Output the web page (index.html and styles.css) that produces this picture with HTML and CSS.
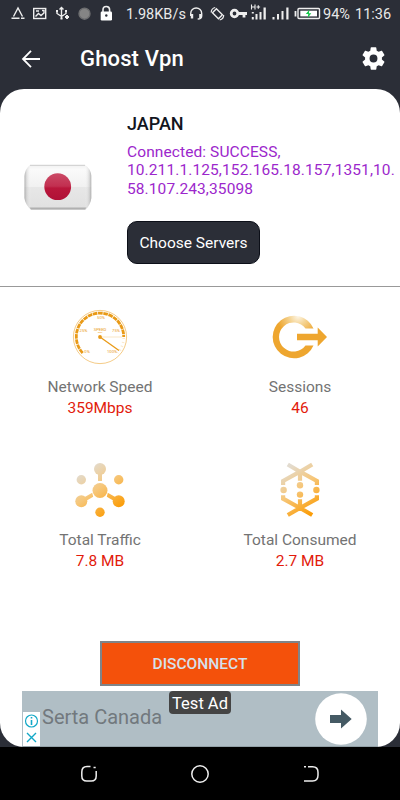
FILE: index.html
```html
<!DOCTYPE html>
<html lang="en">
<head>
  <meta charset="UTF-8" />
  <meta name="viewport" content="width=device-width, initial-scale=1.0"/>
  <title>Ghost Vpn</title>
  <link rel="stylesheet" href="styles.css">
</head>
<body>

  <div class="status-bar">
    <svg class="status-left" width="104" height="28" viewBox="0 0 104 28" fill="none" stroke="#eee" stroke-width="1.4">
      <path d="M3.500 16.500L8 8l4.500 8.500M1.500 18.300H5M11 18.300h3.500M5 18.300h4.500"/>
      <rect x="23.700" y="8.500" width="12" height="10"/>
      <path d="M26 11h3M32 10.500h2v2M25.500 16.500l3-3 2.500 2 3.500-3"/>
      <path d="M51.500 8v11M47 11v2.500l4.500 3 4.500-3v-2.500M49.500 9.500l2-2 2 2"/>
      <path d="M46 11h2M55 11h2M50.500 18.500h2M57 15v4M55 17h4" stroke-width="2"/>
      <circle cx="74.500" cy="13.700" r="5.500" fill="#858585" stroke="#6d6e70"/>
      <path d="M93 12V9.800a3.300 3.300 0 0 1 6.600 0V12" stroke-width="1.600"/>
      <rect x="90.700" y="11.500" width="11.300" height="9" rx="1.200" fill="#fff" stroke="none"/>
      <circle cx="96.300" cy="15.500" r="1.200" fill="#2b2e37" stroke="none"/>
    </svg>
    <span class="net-rate">1.98KB/s</span>
    <svg class="status-right" width="133" height="28" viewBox="0 0 133 28" fill="none" stroke="#eee" stroke-width="1.400">
      <path d="M2.700 16v-2.500a5.500 5.500 0 0 1 11 0V16q0 3-4 3"/>
      <path d="M4 14v4.500M12.400 14v4" stroke-width="2.400"/>
      <rect x="26.600" y="9.500" width="5.600" height="8.500" transform="rotate(-45 29.400 13.700)"/>
      <path d="M23.200 12.500q0-4 4-5M35.700 15q0 4-4 5" stroke-width="1.200"/>
      <circle cx="46.500" cy="13.500" r="3.300" stroke-width="2.800"/>
      <path d="M50 13.500h9M56 13.500v4" stroke-width="2.800"/>
      <g fill="#eee" stroke="none">
        <path d="M63.800 17h2v2.500h-2zM67.500 14h2v5.500h-2zM71.500 12h2v7.500h-2zM75.500 7.500h2.300v12h-2.300zM63.800 12h2v1.500h-2z"/>
        <path d="M85 17h2v2.500h-2zM89.500 14h2v5.500h-2zM94 11h2v8.500h-2zM98.800 7.500h2.200v12h-2.200z" transform="translate(-.5)"/>
      </g>
      <path d="M63.500 4.500v5M67 4.500v5M63.500 7H67M68.500 7h3.600M70.300 5.200v3.600" stroke-width="1.100"/>
      <path d="M107.500 11v5.500" stroke-width="1.800"/>
      <rect x="110" y="8.500" width="21.500" height="10" rx="1"/>
      <rect x="112.300" y="10.700" width="16.700" height="5.700" fill="#fff" stroke="none"/>
      <path d="M121.500 9.500l-3.700 4.500h2.500l-.7 4 3.700-4.700h-2.400z" fill="#13c948" stroke="none"/>
    </svg>
    <span class="battery">94%</span>
    <span class="clock">11:36</span>
  </div>

  <div class="app-bar">
    <svg class="back" width="20" height="18" viewBox="0 0 20 18" fill="none" stroke="#fff" stroke-width="1.800">
      <path d="M10 .8L2 9l8 8.200M2 9h17"/>
    </svg>
    <h1>Ghost Vpn</h1>
    <svg class="settings" width="27" height="27" viewBox="0 0 24 24" fill="#fff">
      <path d="M19.430 12.980c.04-.32.07-.64.07-.98s-.03-.66-.07-.98l2.110-1.650c.19-.15.24-.42.12-.64l-2-3.460c-.12-.22-.39-.3-.61-.22l-2.490 1c-.52-.4-1.080-.73-1.690-.98l-.38-2.650C14.460 2.180 14.250 2 14 2h-4c-.25 0-.46.18-.49.42l-.38 2.650c-.61.25-1.170.59-1.690.98l-2.490-1c-.23-.09-.49 0-.61.22l-2 3.460c-.13.22-.07.49.12.64l2.110 1.650c-.04.32-.07.65-.07.98s.03.66.07.98l-2.110 1.650c-.19.15-.24.42-.12.64l2 3.460c.12.22.39.3.61.22l2.490-1c.52.4 1.080.73 1.690.98l.38 2.650c.03.24.24.42.49.42h4c.25 0 .46-.18.49-.42l.38-2.650c.61-.25 1.170-.59 1.690-.98l2.490 1c.23.09.49 0 .61-.22l2-3.460c.12-.22.07-.49-.12-.64l-2.110-1.650zM12 15.500a3.500 3.500 0 1 1 0-7 3.500 3.500 0 0 1 0 7z"/>
    </svg>
  </div>

  <div class="card">
    <div class="server">
      <svg class="flag" width="70" height="48" viewBox="0 0 70 48">
        <defs>
          <linearGradient id="flag-bg" x1="0" y1="0" x2="0" y2="1">
            <stop offset="0" stop-color="#f1f1f1"/>
            <stop offset=".1" stop-color="#fafafa"/>
            <stop offset=".48" stop-color="#f1f1f1"/>
            <stop offset=".5" stop-color="#e7e7e7"/>
            <stop offset="1" stop-color="#e0e0e0"/>
          </linearGradient>
          <linearGradient id="flag-edge" x1="0" y1="0" x2="1" y2="0">
            <stop offset="0" stop-color="#999" stop-opacity=".75"/>
            <stop offset=".03" stop-color="#bbb" stop-opacity=".45"/>
            <stop offset=".1" stop-color="#fff" stop-opacity="0"/>
            <stop offset=".9" stop-color="#fff" stop-opacity="0"/>
            <stop offset=".97" stop-color="#bbb" stop-opacity=".45"/>
            <stop offset="1" stop-color="#999" stop-opacity=".75"/>
          </linearGradient>
          <linearGradient id="flag-sun" x1="0" y1="0" x2="0" y2="1">
            <stop offset="0" stop-color="#cb4a66"/>
            <stop offset=".48" stop-color="#c22f50"/>
            <stop offset=".55" stop-color="#b9173b"/>
            <stop offset="1" stop-color="#b01037"/>
          </linearGradient>
        </defs>
        <path d="M7 1h55q6 4 6.300 11v22q-.5 6-5.800 12H8q-6-6-6.500-12V12Q2 5 7 1z" fill="url(#flag-bg)"/>
        <path d="M7 1h55q6 4 6.300 11v22q-.5 6-5.800 12H8q-6-6-6.500-12V12Q2 5 7 1z" fill="url(#flag-edge)"/>
        <path d="M7 1.300h55" stroke="#ccc"/>
        <path d="M6.500 43.500h57l-1.500 2H8z" fill="#b0b0b0"/>
        <circle cx="34.700" cy="22.700" r="13.400" fill="url(#flag-sun)"/>
      </svg>
      <div class="server-info">
        <h2>JAPAN</h2>
        <p>Connected: SUCCESS,<br>10.211.1.125,152.165.18.157,1351,10.<br>58.107.243,35098</p>
        <button class="choose-btn">Choose Servers</button>
      </div>
    </div>

    <div class="stats">
      <div class="stat">
        <svg width="60" height="60" viewBox="0 0 60 60" fill="none" stroke="#e99a17">
          <circle cx="30" cy="30" r="26.600" stroke-width=".8" opacity=".65"/>
          <path d="M12.700 46A23.700 23.700 0 1 1 53.700 30" stroke-width="2.800" stroke-dasharray="4.600 .7"/>
          <path d="M53.700 31a23.700 23.700 0 0 1-6 15" stroke-width="2.600" stroke-dasharray="1 3" opacity=".22"/>
          <path d="M31 30h21" stroke-width=".6" opacity=".4"/>
          <path d="M30 30l19 13.500" stroke-width="1.300"/>
          <circle cx="30" cy="30" r="1.900" fill="#e99a17" stroke="none"/>
          <g class="dial-text">
            <text x="31" y="12">50%</text>
            <text x="13.500" y="24.500">25%</text>
            <text x="46" y="24.500">75%</text>
            <text x="17" y="45.500">0%</text>
            <text x="42" y="46">100%</text>
            <text x="30" y="23.500">SPEED</text>
            <text x="30" y="25.500" class="tiny">TEST</text>
          </g>
        </svg>
        <div class="label">Network Speed</div>
        <div class="value">359Mbps</div>
      </div>
      <div class="stat">
        <svg width="60" height="60" viewBox="0 0 60 60">
          <defs>
            <radialGradient id="shine" gradientUnits="userSpaceOnUse" cx="28" cy="9" r="21">
              <stop offset="0" stop-color="#fdf6e8"/>
              <stop offset=".4" stop-color="#f5d596"/>
              <stop offset="1" stop-color="#eea62f"/>
            </radialGradient>
          </defs>
          <path d="M43.500 21.500A21.300 21.300 0 1 0 43.500 38.500H35.500A14.600 14.600 0 1 1 35.500 21.500z" fill="url(#shine)"/>
          <path d="M27 26.800h20.700v-6.300l9.300 9.500-9.300 9.500V33.200H27z" fill="#eea62f"/>
        </svg>
        <div class="label">Sessions</div>
        <div class="value">46</div>
      </div>
      <div class="stat">
        <svg width="60" height="60" viewBox="0 0 60 60">
          <defs>
            <linearGradient id="fade" gradientUnits="userSpaceOnUse" x1="14" y1="10" x2="44" y2="52">
              <stop offset="0" stop-color="#e2dbcf"/>
              <stop offset=".45" stop-color="#f6c77b"/>
              <stop offset="1" stop-color="#fb9d08"/>
            </linearGradient>
          </defs>
          <g fill="url(#fade)">
            <circle cx="30" cy="9" r="6"/>
            <path d="M28 12h4v9h-4zM22.200 32.700l-10 5.800 2 3.500 9-5.200zM37.800 32.700l10 5.800-2 3.500-9-5.200z"/>
            <circle cx="30" cy="30.500" r="7.500"/>
            <circle cx="11.300" cy="41.300" r="6"/>
            <circle cx="48.700" cy="41.300" r="6"/>
            <circle cx="11.300" cy="19.700" r="4.700"/>
            <circle cx="48.700" cy="19.700" r="4.700"/>
            <circle cx="30" cy="52.200" r="4.700"/>
          </g>
        </svg>
        <div class="label">Total Traffic</div>
        <div class="value">7.8 MB</div>
      </div>
      <div class="stat">
        <svg width="60" height="60" viewBox="0 0 60 60">
          <g fill="none" stroke="url(#fade)" stroke-width="4.200">
            <path d="M17.800 4.500L30 11.700l16.900 9.300v4M42.200 4.500L30 11.700 13.100 21v4M30.010 11L30 20.700"/>
            <path d="M17.800 55L30 48l16.900-9.300v-3.500M42.200 55L30 48l-16.900-9.300v-3.500M30.010 49L30 39.300"/>
          </g>
          <g fill="url(#fade)">
            <circle cx="30" cy="25.300" r="3.200"/>
            <circle cx="30" cy="34.600" r="3.200"/>
            <circle cx="13.600" cy="30" r="3.200"/>
            <circle cx="46.400" cy="30" r="3.200"/>
          </g>
        </svg>
        <div class="label">Total Consumed</div>
        <div class="value">2.7 MB</div>
      </div>
    </div>

    <button class="disconnect-btn">DISCONNECT</button>

    <div class="ad">
      <span class="ad-title">Serta Canada</span>
      <svg class="ad-arrow" width="52" height="52" viewBox="0 0 52 52">
        <circle cx="26" cy="26" r="25.800" fill="#fff"/>
        <path d="M15 22h11v-5.500L36.700 26 26 35.500V30H15z" fill="#455a64"/>
      </svg>
      <span class="ad-tag">Test Ad</span>
      <svg class="ad-choices" width="17" height="34" viewBox="0 0 17 34" fill="none" stroke="#12a8c7" stroke-width="1.200">
        <circle cx="8.500" cy="9" r="6"/>
        <path d="M8.500 8v5M8.500 5v1.500" stroke-width="1.600"/>
        <path d="M4 21l9 9M13 21l-9 9" stroke-width="1.400"/>
      </svg>
    </div>
  </div>

  <div class="nav-bar">
    <svg width="18" height="18" viewBox="0 0 18 18" fill="none" stroke="#eee" stroke-width="1.500">
      <path d="M10.500 1.500H7Q1.800 1.500 1.800 7v4q0 5 5 5h4.400q5 0 5-5V6"/>
      <path d="M13.500 2.500h2.200"/>
    </svg>
    <svg width="18" height="18" viewBox="0 0 18 18" fill="none" stroke="#eee" stroke-width="1.500">
      <circle cx="9" cy="9" r="8.200"/>
    </svg>
    <svg width="18" height="18" viewBox="0 0 18 18" fill="none" stroke="#eee" stroke-width="1.500">
      <path d="M2 1.800h2M6 1.800h4.500q5.500 0 5.500 5.500v3q0 5.700-5.500 5.700H2"/>
    </svg>
  </div>

</body>
</html>
```

FILE: styles.css
```css
* {
  box-sizing: border-box;
}

body {
  margin: 0;
  height: 800px;
  display: flex;
  flex-direction: column;
  font-family: Roboto, sans-serif;
  background-color: #2b2e37;
  overflow: hidden;
}

h1, h2, p {
  margin: 0;
}

svg {
  display: block;
  flex: none;
}

button {
  font-family: inherit;
  padding: 0;
}

.status-bar {
  height: 28px;
  display: flex;
  align-items: center;
  padding-left: 10px;
  color: #e9e9e9;
  font-size: 14.5px;
  white-space: nowrap;
}

.status-left {
  margin-right: 12px;
}

.net-rate {
  width: 62px;
}

.battery {
  margin-left: 2px;
  width: 32px;
}

.app-bar {
  height: 61px;
  display: flex;
  align-items: center;
  padding: 0 13px 0 21px;
}

.app-bar h1 {
  flex: 1;
  margin-left: 39px;
  color: #fff;
  font-size: 22px;
  font-weight: 500;
  letter-spacing: .15px;
}

.card {
  height: 658px;
  display: flex;
  flex-direction: column;
  background-color: #fff;
  border-radius: 24px;
  overflow: hidden;
}

.server {
  height: 198px;
  display: flex;
  border-bottom: 1px solid #999;
}

.flag {
  margin: 75px 0 0 23px;
}

.server-info {
  margin: 24px 0 0 34px;
}

.server-info h2 {
  color: #121520;
  font-size: 18px;
  line-height: 22px;
  font-weight: 500;
}

.server-info p {
  margin-top: 8px;
  color: #9c27cc;
  font-size: 15.5px;
  line-height: 18.3px;
  letter-spacing: .1px;
  white-space: nowrap;
}

.choose-btn {
  display: block;
  margin-top: 23px;
  width: 133px;
  height: 43px;
  padding-top: 2px;
  border: 1px solid #0c0f18;
  border-radius: 10px;
  background-color: #2b2e37;
  color: #fff;
  font-size: 15.5px;
}

.stats {
  display: grid;
  grid-template-columns: 1fr 1fr;
  grid-template-rows: 153px 153px;
  padding-top: 20px;
}

.stat {
  display: flex;
  flex-direction: column;
  align-items: center;
  font-size: 15.5px;
  line-height: 21px;
}

.label {
  margin-top: 10px;
  color: #737373;
}

.value {
  color: #e21b0c;
}

.dial-text {
  fill: #e99a17;
  stroke: none;
  font-size: 4.2px;
  text-anchor: middle;
}

.tiny {
  font-size: 2px;
}

.disconnect-btn {
  align-self: center;
  margin-top: 28px;
  width: 200px;
  height: 45px;
  border: 2px solid #808488;
  background-color: #f4510b;
  color: #d4e1ed;
  font-size: 15.5px;
  font-weight: 500;
}

.ad {
  position: relative;
  display: flex;
  align-items: center;
  justify-content: space-between;
  margin: 5px 22px 0;
  height: 56px;
  padding: 0 11px 0 20px;
  background-color: #b0bec5;
  border-bottom: 1px solid #92a0a6;
}

.ad-title {
  color: #72797e;
  font-size: 20px;
  line-height: 24px;
  margin-bottom: 3px;
}

.ad-tag {
  position: absolute;
  top: 0;
  left: 147px;
  width: 62px;
  height: 23px;
  border-radius: 4px;
  background-color: #444;
  color: #fff;
  font-size: 16.5px;
  line-height: 25px;
  text-align: center;
}

.ad-choices {
  position: absolute;
  left: 1px;
  bottom: 0;
  background-color: #fff;
}

.nav-bar {
  flex: 1;
  display: flex;
  justify-content: center;
  align-items: center;
  gap: 93px;
  background-color: #000;
}
```
